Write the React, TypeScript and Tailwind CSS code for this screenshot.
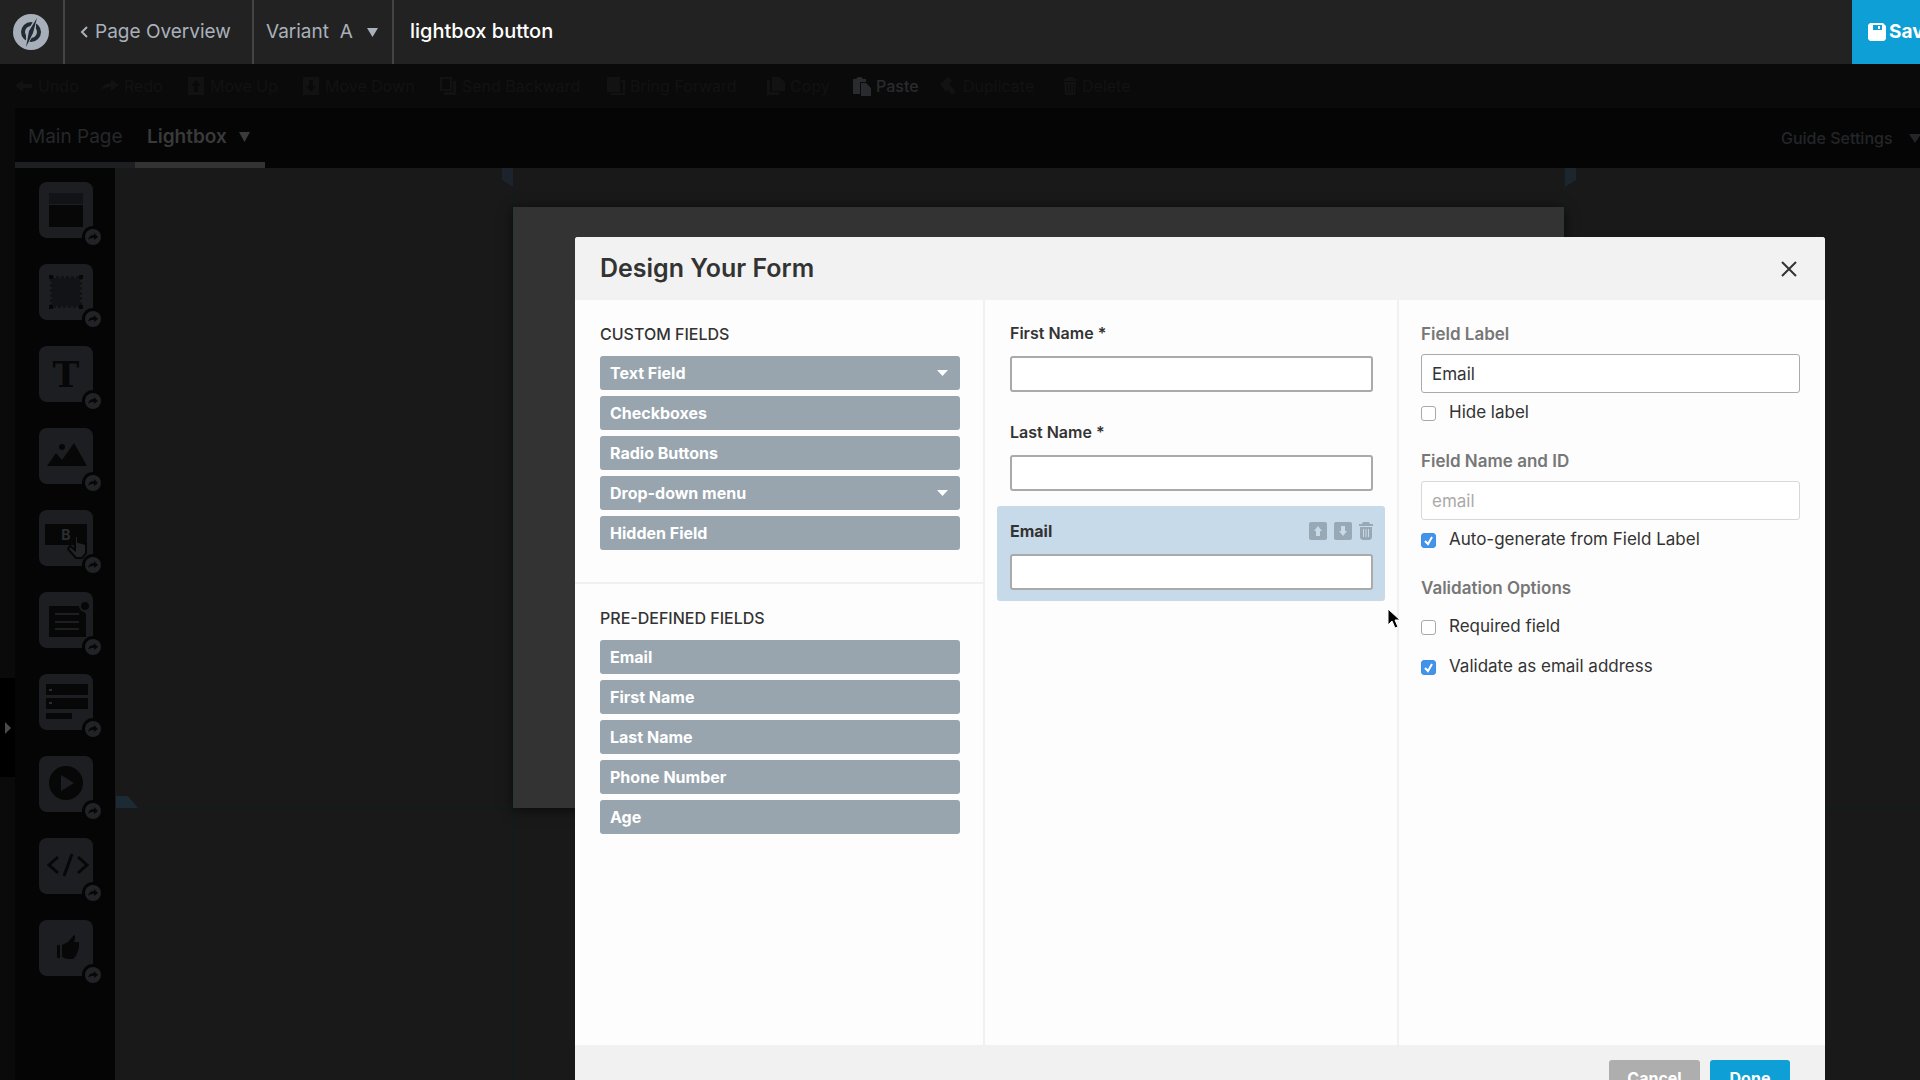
import { useState } from "react";
import type { ReactNode } from "react";

const toolbarItems = [
  { name: "Undo", icon: "undo", box: "w-[24px]", item: "w-[86px]" },
  { name: "Redo", icon: "redo", box: "w-[24px]", item: "w-[86px]" },
  { name: "Move Up", icon: "up", box: "w-[24px]", item: "w-[115px]" },
  { name: "Move Down", icon: "down", box: "w-[24px]", item: "w-[137px]" },
  { name: "Send Backward", icon: "back", box: "w-[24px]", item: "w-[168px]" },
  { name: "Bring Forward", icon: "front", box: "w-[24px]", item: "w-[160px]" },
  { name: "Copy", icon: "copy", box: "w-[24px]", item: "w-[86px]" },
  { name: "Paste", icon: "paste", box: "w-[24px]", item: "w-[87px]", active: true },
  { name: "Duplicate", icon: "dup", box: "w-[24px]", item: "w-[123px]" },
  { name: "Delete", icon: "trash", box: "w-[20px]", item: "w-[90px]" },
];

const customFields = [
  { name: "Text Field", menu: true },
  { name: "Checkboxes" },
  { name: "Radio Buttons" },
  { name: "Drop-down menu", menu: true },
  { name: "Hidden Field" },
];

const predefinedFields = [
  { name: "Email" },
  { name: "First Name" },
  { name: "Last Name" },
  { name: "Phone Number" },
  { name: "Age" },
];

const toolbarShapes: Record<string, ReactNode> = {
  undo: <path d="M1 10 9 4v4h9v4H9v4z" />,
  redo: <path d="M19 9 11 3v4C5 7 2 10 1 15c3-3 6-4 10-4v4z" />,
  up: <path fillRule="evenodd" d="M2 1h16v18H2zM10 4 5 10h3v6h4v-6h3z" />,
  down: <path fillRule="evenodd" d="M2 1h16v18H2zM10 16l5-6h-3V4H8v6H5z" />,
  back: <path fillRule="evenodd" d="M2 1h12v14H2zM4 3v10h8V3zM15 5h3v14H6v-3h9z" />,
  front: <path fillRule="evenodd" d="M1 1h13v15H1zM15 4h4v15H5v-2h12V6h-2z" />,
  copy: <path d="M1 4h3v12h9v3H1zM6 1h7l6 5v9H6z" />,
  paste: <path d="M1 3h3l2-2h3l2 2h3v3H8v12H1zM9 7h5l5 5v8H9z" />,
  dup: <path d="m1 8 8-7 4 4-3 3 7 8-4 3-4-5-2 2z" />,
  trash: <path fillRule="evenodd" d="M5 1h6l1 2h3v2H1V3h3zM2 6h12l-1 13H3zM5 8v9h1V8zM8 8v9h1V8zM11 8v9h1V8z" />,
};

// tile glyphs, 54x56 box
const tools: { name: string; shape: ReactNode }[] = [
  {
    name: "Section",
    shape: (
      <>
        <rect x="10" y="11" width="34" height="11" fill="#121316" />
        <rect x="10" y="23" width="34" height="22" />
      </>
    ),
  },
  {
    name: "Box",
    shape: (
      <>
        <rect x="13" y="14" width="28" height="28" fill="#121316" />
        <rect x="12" y="13" width="30" height="30" fill="none" stroke="#070707" strokeDasharray="3 2" />
        <path d="M10 11h4v4h-4zM40 11h4v4h-4zM10 41h4v4h-4zM40 41h4v4h-4z" />
      </>
    ),
  },
  {
    name: "Text",
    shape: (
      <text x="27" y="41" textAnchor="middle" fontSize="36" fontWeight="bold" fontFamily="DejaVu Serif, serif">
        T
      </text>
    ),
  },
  {
    name: "Image",
    shape: (
      <>
        <circle cx="23" cy="19" r="3" />
        <path d="m8 38 9-13 6 7 12-17 13 23z" />
      </>
    ),
  },
  {
    name: "Button",
    shape: (
      <>
        <rect x="6" y="14" width="42" height="21" />
        <text x="27" y="30" textAnchor="middle" fontSize="14" fontWeight="bold" fill="#2b2d31" fontFamily="Inter, sans-serif">
          B
        </text>
        <path d="M36 26v14l-5-4-2 3 8 9h6l4-5v-9l-8-2v-6z" fill="#222427" stroke="#070707" strokeWidth="2" />
      </>
    ),
  },
  {
    name: "Form",
    shape: (
      <>
        <path fillRule="evenodd" d="M10 14h30l7 8v23H10zM16 21v2h24v-2zM16 29v2h24v-2zM16 36v2h24v-2z" />
        <circle cx="46" cy="14" r="5" stroke="#1c1e21" strokeWidth="2" />
      </>
    ),
  },
  {
    name: "Fields",
    shape: (
      <>
        <path d="M7 10h42v11H7zM7 24h42v11H7zM7 39h26v6H7z" />
        <path d="M10 15h3v2h-3zM10 28h3v2h-3z" fill="#2b2d31" />
      </>
    ),
  },
  {
    name: "Video",
    shape: <path fillRule="evenodd" d="M27 10a17 17 0 1 0 0 34 17 17 0 0 0 0-34zM22 19l13 8-13 8z" />,
  },
  {
    name: "Custom HTML",
    shape: <path d="m19 19-9 8 9 8M39 19l9 8-9 8M33 16l-8 22" fill="none" stroke="#070707" strokeWidth="3" />,
  },
  {
    name: "Social",
    shape: <path d="M18 25h3v13h-3zM23 25l6-3 6-7c2 1 1 4 0 7h5v6l-3 8-3 3h-6l-5-2z" />,
  },
];

function Caret({ className }: { className: string }) {
  return (
    <svg viewBox="0 0 12 10" preserveAspectRatio="none" className={className} fill="currentColor" aria-hidden="true">
      <path d="M0 0h12L6 10z" />
    </svg>
  );
}

function TopBar() {
  return (
    <header className="flex h-16 overflow-hidden bg-[#222222] text-[19px] text-[#a9b1ba]">
      <a href="#" aria-label="Home" className="flex w-[65px] shrink-0 items-center border-r-2 border-[#444444] pl-[13px]">
        <svg viewBox="0 0 36 36" className="h-9 w-9">
          <circle cx="18" cy="18" r="18" fill="#a7afba" />
          <circle cx="18" cy="18" r="8" fill="none" stroke="#222a33" strokeWidth="4" />
          <path d="M23 3 13 19v14l10-16z" fill="#a7afba" />
          <path d="M24 4 20 19 13 33l3-16z" fill="#222a33" />
        </svg>
      </a>
      <a href="#" className="flex w-[189px] shrink-0 items-center border-r-2 border-[#444444] pl-[15px]">
        <svg viewBox="0 0 8 12" className="mr-[7px] h-3 w-2" fill="none" stroke="currentColor" strokeWidth="2">
          <path d="M7 1 2 6l5 5" />
        </svg>
        Page Overview
      </a>
      <button className="flex w-[140px] shrink-0 items-center border-r-2 border-[#444444] pl-3">
        Variant&nbsp; A
        <Caret className="ml-[14px] h-[9px] w-[11px]" />
      </button>
      <h1 className="flex items-center pb-[2px] pl-4 text-xl font-medium text-white">lightbox button</h1>
      <button className="ml-auto flex w-[68px] shrink-0 items-center gap-[3px] bg-[#0e9fd6] pl-4 font-bold text-white">
        <svg viewBox="0 0 18 18" className="h-[18px] w-[18px] shrink-0" fill="currentColor" aria-hidden="true">
          <path fillRule="evenodd" d="M2 0h13l3 3v13l-2 2H2l-2-2V2zM5 2v5h9V2zM10 3h2v3h-2z" />
        </svg>
        Save
      </button>
    </header>
  );
}

function Toolbar() {
  return (
    <div className="flex h-11 items-center bg-[#0a0a0a] pl-[14px] text-base">
      {toolbarItems.map((item) => (
        <button
          key={item.name}
          className={`flex shrink-0 items-center whitespace-nowrap ${item.item} ${
            item.active ? "font-medium text-[#2a2b2e]" : "text-[#121213]"
          }`}
        >
          <span className={`shrink-0 ${item.box}`}>
            <svg viewBox="0 0 20 20" className="h-5 w-5" fill="currentColor" aria-hidden="true">
              {toolbarShapes[item.icon]}
            </svg>
          </span>
          {item.name}
        </button>
      ))}
    </div>
  );
}

function PageTabs() {
  return (
    <nav className="ml-[15px] flex h-[60px] bg-[#050505] text-[19px]">
      <a href="#" className="flex w-[120px] items-center border-b-6 border-[#1e1f22] pt-1 pl-[13px] whitespace-nowrap text-[#26272a]">
        Main Page
      </a>
      <a href="#" className="flex w-[130px] items-center border-b-6 border-[#333333] pt-1 pl-3 font-semibold text-[#3a3a3b]">
        Lightbox
        <Caret className="ml-3 h-[10px] w-[11px]" />
      </a>
      <button className="ml-auto flex w-[139px] items-center overflow-hidden text-base font-medium whitespace-nowrap text-[#242528]">
        Guide Settings
        <Caret className="ml-4 h-[9px] w-3 shrink-0" />
      </button>
    </nav>
  );
}

function ToolRail() {
  return (
    <div className="flex shrink-0">
      <div className="flex w-[15px] flex-col bg-[#0a0a0a] pt-[510px]">
        <button aria-label="Expand" className="flex h-[99px] items-center bg-black pl-[5px] text-[#4a4a4a]">
          <svg viewBox="0 0 6 12" className="h-3 w-[6px]" fill="currentColor">
            <path d="M0 0l6 6-6 6z" />
          </svg>
        </button>
      </div>
      <div className="flex w-[100px] flex-col gap-[26px] bg-[#050505] pt-[14px] pl-6">
        {tools.map((tool) => (
          <button key={tool.name} aria-label={tool.name} className="relative h-14 w-[54px] shrink-0 rounded-lg bg-[#1c1e21]">
            <svg viewBox="0 0 54 56" className="h-14 w-[54px]" fill="#070707">
              {tool.shape}
            </svg>
            <svg viewBox="0 0 22 22" className="absolute -right-[11px] -bottom-[10px] h-[22px] w-[22px]">
              <circle cx="11" cy="11" r="11" fill="#050505" />
              <circle cx="11" cy="11" r="8" fill="#222326" />
              <path d="M6 14c1-4 3-5 6-5V7l4 4-4 3v-2c-2 0-4 0-6 2z" fill="#070707" />
            </svg>
          </button>
        ))}
      </div>
    </div>
  );
}

function Canvas() {
  return (
    <main className="relative flex-1 overflow-hidden bg-[#191919]">
      {/* guides */}
      <div className="absolute inset-y-0 left-[397px] w-px bg-[#0f1b1e]" />
      <div className="absolute inset-y-0 left-[1449px] w-px bg-[#0d1f1f]" />
      <div className="absolute inset-x-0 top-[640px] h-px bg-[#0f1b1e]" />
      <svg viewBox="0 0 11 19" className="absolute top-0 left-[387px] h-[19px] w-[11px]" fill="#1d232c">
        <path d="M0 0h11v19L0 12z" />
      </svg>
      <svg viewBox="0 0 11 19" className="absolute top-0 left-[1450px] h-[19px] w-[11px]" fill="#1d262c">
        <path d="M0 0h11v12L0 19z" />
      </svg>
      <svg viewBox="0 0 22 12" className="absolute top-[628px] left-[1px] h-3 w-[22px]" fill="#1b2a33">
        <path d="M0 0h12l10 12H0z" />
      </svg>
      {/* lightbox page */}
      <div className="absolute top-[39px] left-[398px] h-[601px] w-[1051px] bg-[#333333] shadow-[0_2px_12px_rgba(0,0,0,0.6)]" />
    </main>
  );
}

function FieldList({ title, fields }: { title: string; fields: { name: string; menu?: boolean }[] }) {
  return (
    <section className="pt-[22px] pr-[23px] pl-[25px]">
      <h3 className="mb-[10px] text-base leading-6 font-medium text-[#333333]">{title}</h3>
      <div className="flex flex-col gap-[6px]">
        {fields.map((field) => (
          <button
            key={field.name}
            className="flex h-[34px] items-center justify-between rounded-[3px] bg-[#98a5ae] pr-3 pl-[10px] text-base font-bold text-white"
          >
            {field.name}
            {field.menu && <Caret className="h-[6px] w-[11px]" />}
          </button>
        ))}
      </div>
    </section>
  );
}

function FormField({ id, label, selected }: { id: string; label: string; selected?: boolean }) {
  return (
    <div className={`rounded-[3px] pt-[13px] pr-3 pb-[11px] pl-[13px] ${selected ? "bg-[#c7daea]" : ""}`}>
      <div className="mb-[11px] flex h-6 items-center">
        <label htmlFor={id} className={`text-base text-[#333333] ${selected ? "font-bold" : "font-semibold"}`}>
          {label}
        </label>
        {selected && (
          <div className="ml-auto flex items-center gap-[7px] text-[#98a8b4]">
            <button aria-label="Move up">
              <svg viewBox="0 0 18 18" className="h-[18px] w-[18px]" fill="currentColor">
                <rect width="18" height="18" rx="2" />
                <path d="m9 4 4 5h-2v5H7V9H5z" fill="#c7daea" />
              </svg>
            </button>
            <button aria-label="Move down">
              <svg viewBox="0 0 18 18" className="h-[18px] w-[18px]" fill="currentColor">
                <rect width="18" height="18" rx="2" />
                <path d="m9 14 4-5h-2V4H7v5H5z" fill="#c7daea" />
              </svg>
            </button>
            <button aria-label="Delete field">
              <svg viewBox="0 0 14 18" className="h-[18px] w-[14px]" fill="currentColor">
                <path d="M4 0h6l1 2h3v2H0V2h3z" />
                <path fillRule="evenodd" d="M1 5h12v11l-2 2H3l-2-2zM4 7v8h1V7zM6.500 7v8h1V7zM9 7v8h1V7z" />
              </svg>
            </button>
          </div>
        )}
      </div>
      <input id={id} type="text" className="block h-9 w-full rounded-[3px] border-2 border-[#aaaaaa] bg-white px-2 text-base" />
    </div>
  );
}

function Check({ label, checked, onChange }: { label: string; checked: boolean; onChange: (v: boolean) => void }) {
  return (
    <label className="flex h-6 items-center gap-[13px] text-[17px] text-[#333333]">
      <span className="relative flex">
        <input
          type="checkbox"
          checked={checked}
          onChange={(e) => onChange(e.target.checked)}
          className="h-[15px] w-[15px] appearance-none rounded-[3px] border border-[#a8a8a8] bg-white checked:border-[#3f8fe8] checked:bg-[#4294ea]"
        />
        {checked && (
          <svg viewBox="0 0 15 15" className="pointer-events-none absolute inset-0 h-[15px] w-[15px]" fill="none" stroke="white" strokeWidth="2">
            <path d="m4 8 3 3 4-7" />
          </svg>
        )}
      </span>
      {label}
    </label>
  );
}

function FieldSettings() {
  const [fieldLabel, setFieldLabel] = useState("Email");
  const [hideLabel, setHideLabel] = useState(false);
  const [autoName, setAutoName] = useState(true);
  const [required, setRequired] = useState(false);
  const [validateEmail, setValidateEmail] = useState(true);

  return (
    <div className="flex-1 pt-[22px] pr-[25px] pl-[22px]">
      <div className="mb-6 flex flex-col gap-2">
        <label htmlFor="field-label" className="text-[17px] leading-6 font-semibold text-[#777777]">
          Field Label
        </label>
        <input
          id="field-label"
          type="text"
          value={fieldLabel}
          onChange={(e) => setFieldLabel(e.target.value)}
          className="h-[39px] w-full rounded-[3px] border border-[#aaaaaa] bg-white px-[10px] text-[17px] text-[#333333]"
        />
        <Check label="Hide label" checked={hideLabel} onChange={setHideLabel} />
      </div>
      <div className="mb-6 flex flex-col gap-2">
        <label htmlFor="field-name" className="text-[17px] leading-6 font-semibold text-[#777777]">
          Field Name and ID
        </label>
        <input
          id="field-name"
          type="text"
          disabled={autoName}
          value={fieldLabel.toLowerCase()}
          readOnly
          className="h-[39px] w-full rounded-[3px] border border-[#d8d8d8] bg-white px-[10px] text-[17px] text-[#aaaaaa]"
        />
        <Check label="Auto-generate from Field Label" checked={autoName} onChange={setAutoName} />
      </div>
      <fieldset className="flex flex-col gap-4">
        <legend className="mb-[15px] text-[17px] leading-6 font-semibold text-[#777777]">Validation Options</legend>
        <Check label="Required field" checked={required} onChange={setRequired} />
        <Check label="Validate as email address" checked={validateEmail} onChange={setValidateEmail} />
      </fieldset>
    </div>
  );
}

function FormDialog() {
  return (
    <div role="dialog" aria-label="Design Your Form" className="flex flex-col overflow-hidden rounded-t-[3px] bg-[#fdfdfd]">
      <div className="flex h-[63px] shrink-0 items-center justify-between bg-[#f2f2f2] pr-7 pl-[25px]">
        <h2 className="text-[25px] font-semibold text-[#333333]">Design Your Form</h2>
        <button aria-label="Close" className="text-[#333333]">
          <svg viewBox="0 0 16 16" className="h-4 w-4" fill="none" stroke="currentColor" strokeWidth="2">
            <path d="M1 1l14 14M15 1 1 15" />
          </svg>
        </button>
      </div>
      <div className="flex min-h-[745px]">
        <div className="w-[410px] shrink-0 border-r-2 border-[#f1f1f1]">
          <div className="border-b-2 border-[#f1f1f1] pb-8">
            <FieldList title="CUSTOM FIELDS" fields={customFields} />
          </div>
          <FieldList title="PRE-DEFINED FIELDS" fields={predefinedFields} />
        </div>
        <div className="flex w-[414px] shrink-0 flex-col gap-1 border-r-2 border-[#f1f1f1] px-3 pt-2">
          <FormField id="first-name" label="First Name *" />
          <FormField id="last-name" label="Last Name *" />
          <FormField id="email" label="Email" selected />
        </div>
        <FieldSettings />
      </div>
      <div className="flex shrink-0 justify-end gap-[10px] bg-[#f1f1f1] pt-[15px] pr-[35px] pb-[15px] text-base font-bold text-white">
        <button className="h-9 w-[91px] rounded-[3px] bg-[#aeaeae]">Cancel</button>
        <button className="h-9 w-20 rounded-[3px] bg-[#0e9fd6]">Done</button>
      </div>
    </div>
  );
}

export default function App() {
  return (
    <div className="relative flex h-screen flex-col overflow-hidden bg-[#0a0a0a] font-['Inter',sans-serif]">
      <TopBar />
      <Toolbar />
      <PageTabs />
      <div className="flex min-h-0 flex-1">
        <ToolRail />
        <Canvas />
      </div>
      <div className="absolute inset-x-0 top-[237px] pr-[95px] pl-[575px]">
        <FormDialog />
      </div>
      {/* mouse pointer */}
      <svg viewBox="0 0 14 21" className="pointer-events-none absolute top-[608px] left-[1387px] h-[21px] w-[14px]">
        <path d="M1 1v16l4-4 3 7 3-1-3-7h5z" fill="black" stroke="white" strokeWidth="1" />
      </svg>
    </div>
  );
}
